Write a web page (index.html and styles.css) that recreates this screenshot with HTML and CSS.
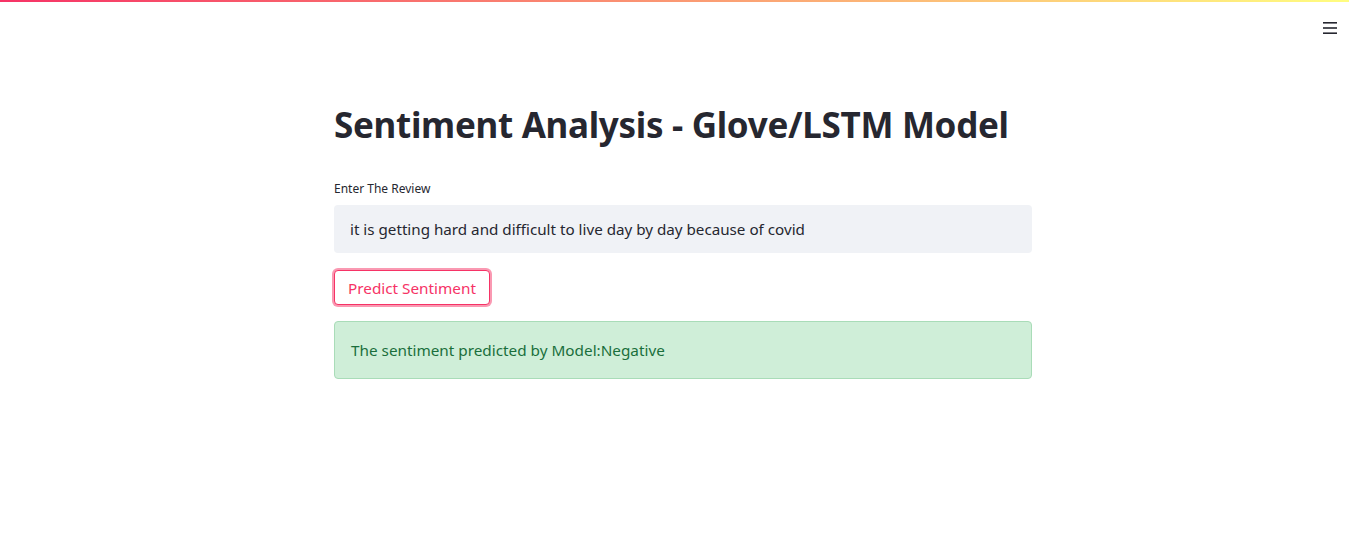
FILE: index.html
```html
<!DOCTYPE html>
<html lang="en">
<head>
<meta charset="utf-8">
<title>Sentiment Analysis</title>
<link rel="stylesheet" href="styles.css">
</head>
<body>
<div class="decoration"></div>
<header class="toolbar">
  <button class="menu" aria-label="Menu">
    <svg width="14" height="12" viewBox="0 0 14 12"><rect x="0" y="0" width="14" height="1.6" fill="#262730"/><rect x="0" y="5.2" width="14" height="1.6" fill="#262730"/><rect x="0" y="10.4" width="14" height="1.6" fill="#262730"/></svg>
  </button>
</header>
<div class="page">
<main class="main">
  <h1 class="title">Sentiment Analysis - Glove/LSTM Model</h1>
  <div class="field">
    <label class="label" for="review">Enter The Review</label>
    <input class="input" id="review" type="text" value="it is getting hard and difficult to live day by day because of covid">
  </div>
  <button class="btn">Predict Sentiment</button>
  <div class="alert">The sentiment predicted by Model:Negative</div>
</main>
</div>
</body>
</html>
```
FILE: styles.css
```css
* { box-sizing: border-box; }
html, body { margin: 0; padding: 0; background: #fff; }
body { font-family: "Noto Sans", "Open Sans", sans-serif; color: #262730; height: 558px; overflow: hidden; }
.decoration { height: 2px; background: linear-gradient(90deg, #f63366, #fffd80); }
.toolbar { display: flex; justify-content: flex-end; padding: 16px 8px 0 0; height: 40px; }
.menu { border: none; background: none; padding: 4px; margin: 0; display: flex; cursor: pointer; }
.page { padding-left: 17px; }
.main { width: 698px; margin: 0 auto; padding-top: 62px; display: flex; flex-direction: column; }
.title { font-family: "Noto Sans", sans-serif; font-weight: 700; font-size: 35px; line-height: 1.2; margin: 0 0 35px; color: #262730; letter-spacing: -0.3px; }
.field { display: flex; flex-direction: column; margin-bottom: 17px; }
.label { font-size: 12px; color: #262730; margin-bottom: 8px; line-height: 16px; }
.input { height: 48px; border: none; border-radius: 4px; background: #f0f2f6; padding: 0 16px; font-family: inherit; font-size: 15.2px; color: #262730; outline: none; }
.btn { align-self: flex-start; height: 35px; padding: 0 13px; border: 1px solid #f63366; border-radius: 4px; background: #fff; color: #f63366; font-family: inherit; font-size: 15.3px; box-shadow: 0 0 0 2px rgba(246,51,102,0.5); margin-bottom: 16px; }
.alert { height: 58px; display: flex; align-items: center; padding: 0 16px; background: #cfeed8; border: 1px solid #a9dcb8; border-radius: 4px; color: #1a6e3c; font-size: 15.3px; }
```
